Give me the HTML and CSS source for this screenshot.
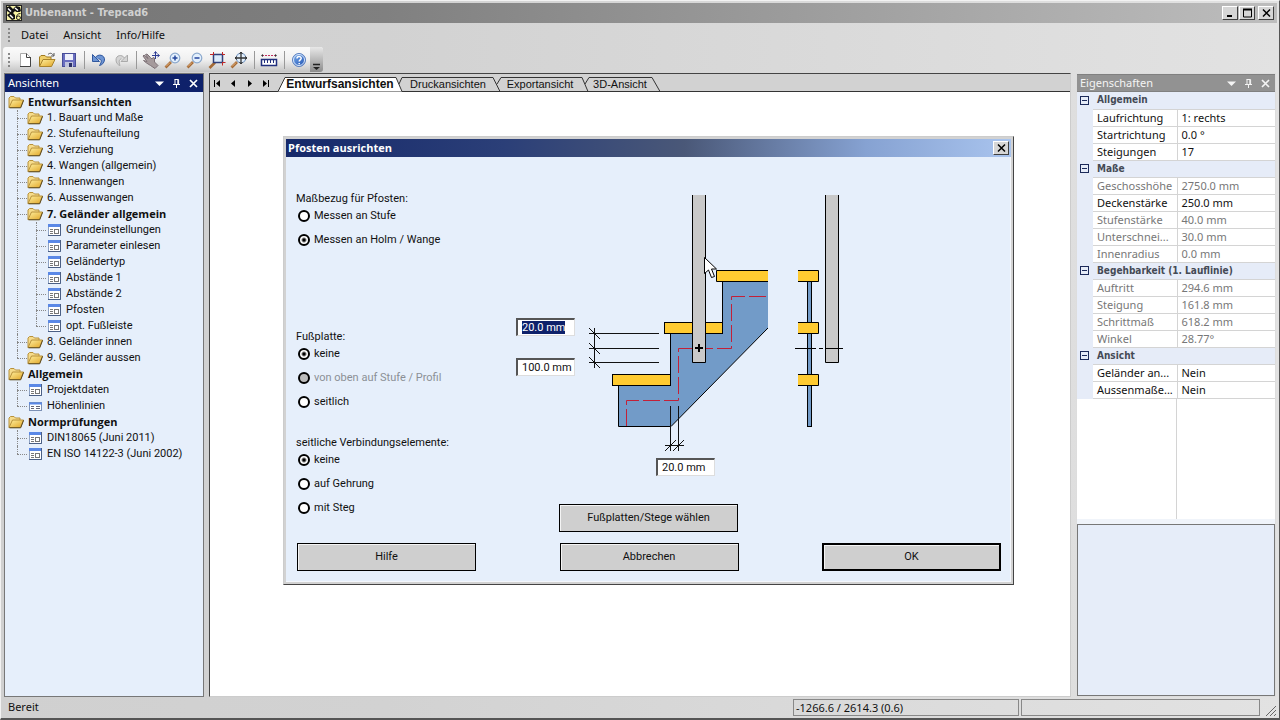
FILE: index.html
```html
<!DOCTYPE html>
<html lang="de">
<head>
<meta charset="utf-8">
<title>Unbenannt - Trepcad6</title>
<link rel="stylesheet" href="styles.css">
</head>
<body>
<svg class="defs" aria-hidden="true">
  <defs>
    <linearGradient id="gold" x1="0" y1="0" x2="1" y2="1"><stop offset="0" stop-color="#fff0a0"/><stop offset="1" stop-color="#e0a526"/></linearGradient>
    <linearGradient id="sky" x1="0" y1="0" x2="1" y2="1"><stop offset="0" stop-color="#7db0ee"/><stop offset="1" stop-color="#1d4fb0"/></linearGradient>
  </defs>
  <symbol id="folder" viewBox="0 0 16 16">
    <path d="M1 13.500V4l1.500-1.500H6L7.500 4H12v2" fill="#f6dc8c" stroke="#b8913a"/>
    <path d="M1 13.500 4.500 6H15.500L12.500 13.500Z" fill="url(#gold)" stroke="#b8913a"/>
    <path d="M1.500 13.800H12.700L15.600 6.300" fill="none" stroke="#5c4a20"/>
  </symbol>
  <symbol id="form" viewBox="0 0 16 16">
    <rect x="2.500" y="2.500" width="12" height="11" fill="#fff" stroke="#8fa3c4"/>
    <path d="M2 3.500H15" stroke="#5a88e6" stroke-width="3"/>
    <path d="M14.500 2V13.500H2" fill="none" stroke="#4a5f85"/>
    <path d="M4 7.500H7M4 9.500H7M4 11.500H7" stroke="#777"/>
    <rect x="8.500" y="7.500" width="4" height="4" fill="#fff" stroke="#777"/>
  </symbol>
  <symbol id="list" viewBox="0 0 16 16">
    <rect x="2.500" y="4.500" width="12" height="8" fill="#fff" stroke="#7b90b5"/>
    <path d="M2 5.500H15" stroke="#5a88e6" stroke-width="2"/>
    <path d="M4 8.500H7M9 8.500H13M4 10.500H7M9 10.500H13" stroke="#667"/>
  </symbol>
  <symbol id="down" viewBox="0 0 11 11"><path d="M1 3.500H10L5.500 8Z" fill="currentColor"/></symbol>
  <symbol id="pin" viewBox="0 0 11 11"><path d="M3.500 1.500H7.500M4 1.500V6.500M6.800 1.500V6.500M7.600 1.500V6.500M2 6.500H9M5.500 7V10" fill="none" stroke="currentColor"/></symbol>
  <symbol id="close" viewBox="0 0 11 11"><path d="M2 2 9 9M9 2 2 9" fill="none" stroke="currentColor" stroke-width="1.700"/></symbol>
  <symbol id="lens" viewBox="0 0 18 18">
    <path d="M1.500 16.500 7 11" stroke="#a56a35" stroke-width="2.600"/>
    <path d="M2 15.500 6 11.500" stroke="#e8b580" stroke-width="1"/>
    <circle cx="11" cy="7" r="4.800" fill="#e3f0fd" stroke="#8ba8cc" stroke-width="1.200"/>
  </symbol>
</svg>

<div class="window">
  <header class="titlebar">
    <svg class="app-icon" viewBox="0 0 16 16" aria-hidden="true">
      <rect width="16" height="16" fill="#f6f2a8"/>
      <path d="M1 2 4 1 7 4 10 1 14 2 15 6 12 8 9 6 7 8 10 11 9 14 6 15 1 10 4 8 1 6Z" fill="#111"/>
      <path d="M2 3.500 5 6.500M9 3 12 5.500M4 10 7 13" stroke="#fff" stroke-width="1.500"/>
      <rect x="9" y="7" width="7" height="9" fill="#fbf6a0"/>
      <path d="M14.500 8.500C11.500 8.500 10.500 10.500 10.500 12.500A2 1.800 0 1 0 12.500 11Q11 11 10.500 12.800" fill="none" stroke="#222"/>
      <rect x=".5" y=".5" width="15" height="15" fill="none" stroke="#222"/>
    </svg>
    <h1 class="title">Unbenannt - Trepcad6</h1>
    <div class="window-buttons">
      <button class="frame-button" type="button" aria-label="Minimieren"><svg viewBox="0 0 11 10"><path d="M2 8H7" stroke="#000" stroke-width="2"/></svg></button>
      <button class="frame-button" type="button" aria-label="Maximieren"><svg viewBox="0 0 11 10"><path d="M1.500 1.500H9.500V9H1.500ZM1 1.500H10" fill="none" stroke="#000"/><path d="M1 1.500H10" stroke="#000" stroke-width="2"/></svg></button>
      <button class="frame-button frame-close" type="button" aria-label="Schließen"><svg viewBox="0 0 11 10"><path d="M2 1.500 9 8.500M9 1.500 2 8.500" stroke="#000" stroke-width="1.500"/></svg></button>
    </div>
  </header>

  <nav class="menubar">
    <span class="grip"></span>
    <button type="button">Datei</button>
    <button type="button">Ansicht</button>
    <button type="button">Info/Hilfe</button>
  </nav>

  <div class="toolbar" role="toolbar" aria-label="Werkzeuge">
    <span class="grip"></span>
    <button type="button" aria-label="Neu"><svg viewBox="0 0 18 18"><path d="M4.500 2.500H10.500L14.500 6.500V15.500H4.500Z" fill="#fff" stroke="#aaa"/><path d="M10.500 2.500V6.500H14.500M14.500 6V15.500H4" fill="none" stroke="#444"/></svg></button>
    <button type="button" aria-label="Öffnen"><svg viewBox="0 0 18 18"><path d="M1.500 15V6L3 4.500H7L8.500 6H13V8" fill="#f0cf6a" stroke="#a07a20"/><path d="M1.500 15.500 5 8.500H17L13.500 15.500Z" fill="url(#gold)" stroke="#a9832c"/><path d="M10 3.500C12 1.500 14 2 15.500 4.500M16 2V5H13" fill="none" stroke="#555"/></svg></button>
    <button type="button" aria-label="Speichern"><svg viewBox="0 0 18 18"><rect x="2.500" y="2.500" width="13" height="13" fill="#6a6ec0" stroke="#474d98"/><rect x="5" y="3" width="8" height="6" fill="#eef0fb"/><rect x="5" y="11" width="8" height="5" fill="#bfc3dd"/><rect x="9" y="12" width="3" height="4" fill="#2a2f66"/></svg></button>
    <span class="separator"></span>
    <button type="button" aria-label="Rückgängig"><svg viewBox="0 0 18 18"><path d="M5 7C8 2 15 4 14.500 9 14 12 12 14 9.500 14.500 12 11 12 8 8.500 8" fill="#6e95d4" stroke="#31589e"/><path d="M2.500 3.500V10.500H9.500Z" fill="#6e95d4" stroke="#31589e"/></svg></button>
    <button type="button" aria-label="Wiederholen" disabled><svg viewBox="0 0 18 18"><path d="M12.500 7C10 3 4 4 4 9 4 12 6 14 8 14.500 6.500 11 7 8 9.500 8" fill="#d5d5d5" stroke="#aaa"/><path d="M15.500 4V10.500H9Z" fill="#d5d5d5" stroke="#aaa"/></svg></button>
    <span class="separator"></span>
    <button type="button" aria-label="Verschieben"><svg viewBox="0 0 18 18"><path d="M1 5 2 4 6 7.500 3.500 3.500 5 3 8.500 6.500 10 8 11 6.500 12.500 7 12.500 11 16 14.500 13 17.500 8.500 14.500 4.500 12 1.500 9.500 5 10.500Z" fill="#a59a9c" stroke="#7d7176"/><path d="M13.500 1V8M10 4.500H17" stroke="#2e3d94"/><path d="M12 2.500 13.500 .500 15 2.500M15.500 3 17.500 4.500 15.500 6" fill="none" stroke="#2e3d94"/></svg></button>
    <button type="button" aria-label="Vergrößern"><svg viewBox="0 0 18 18"><use href="#lens"/><path d="M8.500 7H13.500M11 4.500V9.500" stroke="#24459b" stroke-width="1.500"/></svg></button>
    <button type="button" aria-label="Verkleinern"><svg viewBox="0 0 18 18"><use href="#lens"/><path d="M8.500 7H13.500" stroke="#24459b" stroke-width="1.500"/></svg></button>
    <button type="button" aria-label="Bereich zoomen"><svg viewBox="0 0 18 18"><path d="M1.500 17 7 11.500" stroke="#a56a35" stroke-width="2.600"/><rect x="5.500" y="3.500" width="9" height="8" fill="#dcebfb" stroke="#31407a" stroke-width="1.500"/><path d="M2 3.500H6M5.500 1V4M14 3.500H17M14.500 1V4M14.500 12V14.500M14 11.500H17.500" stroke="#c02828"/></svg></button>
    <button type="button" aria-label="Alles zeigen"><svg viewBox="0 0 18 18"><use href="#lens"/><path d="M11 1V13M5 7H17" stroke="#333" stroke-width="1.300"/><path d="M9.500 3 11 1 12.500 3M9.500 11 11 13 12.500 11M7 5.500 5 7 7 8.500M15 5.500 17 7 15 8.500" fill="none" stroke="#333"/></svg></button>
    <span class="separator"></span>
    <button type="button" aria-label="Messen"><svg viewBox="0 0 18 18"><path d="M2 4.500H16" stroke="#c03060" stroke-dasharray="2 1"/><path d="M1 4.500 3 3V6ZM17 4.500 15 3V6Z" fill="#333"/><rect x="1.500" y="8.500" width="15" height="6" fill="#fff" stroke="#22307e" stroke-width="1.500"/><path d="M4.500 9V12M7.500 9V12M10.500 9V12M13.500 9V12" stroke="#22307e"/></svg></button>
    <span class="separator"></span>
    <button type="button" aria-label="Hilfe anzeigen"><svg viewBox="0 0 18 18"><circle cx="9" cy="9" r="6.500" fill="url(#sky)" stroke="#5a7fc0"/><circle cx="9" cy="9" r="5.500" fill="none" stroke="#dce9fb"/><path d="M7 7.500C7 5 11.200 5 11.200 7.300 11.200 8.800 9.200 9 9.200 10.500M9.200 12V13.300" fill="none" stroke="#fff" stroke-width="1.500"/></svg></button>
    <button class="overflow" type="button" aria-label="Weitere Schaltflächen"><svg viewBox="0 0 9 7"><path d="M1 1.500H8" stroke="#222" stroke-width="1.500"/><path d="M1 4H8L4.500 7Z" fill="#222"/></svg></button>
  </div>

  <main class="workspace">
    <aside class="panel views">
      <div class="panel-head active">
        <h2>Ansichten</h2>
        <button type="button" aria-label="Menü"><svg><use href="#down"/></svg></button>
        <button type="button" aria-label="Anheften"><svg><use href="#pin"/></svg></button>
        <button type="button" aria-label="Schließen"><svg><use href="#close"/></svg></button>
      </div>
      <ul class="tree">
        <li><div class="node strong"><svg><use href="#folder"/></svg>Entwurfsansichten</div>
          <ul>
            <li><div class="node"><svg><use href="#folder"/></svg>1. Bauart und Maße</div></li>
            <li><div class="node"><svg><use href="#folder"/></svg>2. Stufenaufteilung</div></li>
            <li><div class="node"><svg><use href="#folder"/></svg>3. Verziehung</div></li>
            <li><div class="node"><svg><use href="#folder"/></svg>4. Wangen (allgemein)</div></li>
            <li><div class="node"><svg><use href="#folder"/></svg>5. Innenwangen</div></li>
            <li><div class="node"><svg><use href="#folder"/></svg>6. Aussenwangen</div></li>
            <li><div class="node strong"><svg><use href="#folder"/></svg>7. Geländer allgemein</div>
              <ul>
                <li><div class="node"><svg><use href="#form"/></svg>Grundeinstellungen</div></li>
                <li><div class="node"><svg><use href="#form"/></svg>Parameter einlesen</div></li>
                <li><div class="node"><svg><use href="#form"/></svg>Geländertyp</div></li>
                <li><div class="node"><svg><use href="#form"/></svg>Abstände 1</div></li>
                <li><div class="node"><svg><use href="#form"/></svg>Abstände 2</div></li>
                <li><div class="node"><svg><use href="#form"/></svg>Pfosten</div></li>
                <li><div class="node"><svg><use href="#form"/></svg>opt. Fußleiste</div></li>
              </ul>
            </li>
            <li><div class="node"><svg><use href="#folder"/></svg>8. Geländer innen</div></li>
            <li><div class="node"><svg><use href="#folder"/></svg>9. Geländer aussen</div></li>
          </ul>
        </li>
        <li><div class="node strong"><svg><use href="#folder"/></svg>Allgemein</div>
          <ul>
            <li><div class="node"><svg><use href="#form"/></svg>Projektdaten</div></li>
            <li><div class="node"><svg><use href="#list"/></svg>Höhenlinien</div></li>
          </ul>
        </li>
        <li><div class="node strong"><svg><use href="#folder"/></svg>Normprüfungen</div>
          <ul>
            <li><div class="node"><svg><use href="#form"/></svg>DIN18065 (Juni 2011)</div></li>
            <li><div class="node"><svg><use href="#form"/></svg>EN ISO 14122-3 (Juni 2002)</div></li>
          </ul>
        </li>
      </ul>
    </aside>

    <section class="document">
      <div class="tabstrip">
        <svg class="tab-lines" width="460" height="18" viewBox="209 74 460 18" aria-hidden="true">
          <path d="M278 91.500 285 77.500H396L402 91.500Z" fill="#fff"/>
          <path d="M209 91.500H278L285 77.500H396L402 91.500" fill="none" stroke="#333"/>
          <path d="M399 84 402 77.500H493L500 91.500M497 84 501 77.500H582L588 91.500M585 84 589 77.500H652L660 91.500" fill="none" stroke="#333"/>
          <path d="M402 91.500H669" stroke="#333"/>
        </svg>
        <div class="tab-nav">
          <button type="button" aria-label="Erste"><svg viewBox="0 0 9 9"><path d="M1.500 1V8" stroke="#000"/><path d="M7 1V8L3 4.500Z"/></svg></button>
          <button type="button" aria-label="Zurück"><svg viewBox="0 0 9 9"><path d="M6 1V8L2 4.500Z"/></svg></button>
          <button type="button" aria-label="Weiter"><svg viewBox="0 0 9 9"><path d="M3 1V8L7 4.500Z"/></svg></button>
          <button type="button" aria-label="Letzte"><svg viewBox="0 0 9 9"><path d="M7.500 1V8" stroke="#000"/><path d="M2 1V8L6 4.500Z"/></svg></button>
        </div>
        <div class="tabs" role="tablist">
          <button class="tab current" type="button" role="tab" aria-selected="true">Entwurfsansichten</button>
          <button class="tab" type="button" role="tab">Druckansichten</button>
          <button class="tab tab-short" type="button" role="tab">Exportansicht</button>
          <button class="tab tab-short" type="button" role="tab">3D-Ansicht</button>
        </div>
      </div>
      <div class="sheet"></div>
    </section>

    <aside class="panel props">
      <div class="panel-head">
        <h2>Eigenschaften</h2>
        <button type="button" aria-label="Menü"><svg><use href="#down"/></svg></button>
        <button type="button" aria-label="Anheften"><svg><use href="#pin"/></svg></button>
        <button type="button" aria-label="Schließen"><svg><use href="#close"/></svg></button>
      </div>
      <table class="grid">
        <colgroup><col class="col-toggle"><col class="col-name"><col></colgroup>
        <tbody>
          <tr class="group"><td><button type="button" aria-label="Einklappen"></button></td><th colspan="2">Allgemein</th></tr>
          <tr><td></td><td>Laufrichtung</td><td>1: rechts</td></tr>
          <tr><td></td><td>Startrichtung</td><td>0.0 °</td></tr>
          <tr><td></td><td>Steigungen</td><td>17</td></tr>
        </tbody>
        <tbody>
          <tr class="group"><td><button type="button" aria-label="Einklappen"></button></td><th colspan="2">Maße</th></tr>
          <tr class="readonly"><td></td><td>Geschosshöhe</td><td>2750.0 mm</td></tr>
          <tr><td></td><td>Deckenstärke</td><td>250.0 mm</td></tr>
          <tr class="readonly"><td></td><td>Stufenstärke</td><td>40.0 mm</td></tr>
          <tr class="readonly"><td></td><td>Unterschnei...</td><td>30.0 mm</td></tr>
          <tr class="readonly"><td></td><td>Innenradius</td><td>0.0 mm</td></tr>
        </tbody>
        <tbody>
          <tr class="group"><td><button type="button" aria-label="Einklappen"></button></td><th colspan="2">Begehbarkeit (1. Lauflinie)</th></tr>
          <tr class="readonly"><td></td><td>Auftritt</td><td>294.6 mm</td></tr>
          <tr class="readonly"><td></td><td>Steigung</td><td>161.8 mm</td></tr>
          <tr class="readonly"><td></td><td>Schrittmaß</td><td>618.2 mm</td></tr>
          <tr class="readonly"><td></td><td>Winkel</td><td>28.77°</td></tr>
        </tbody>
        <tbody>
          <tr class="group"><td><button type="button" aria-label="Einklappen"></button></td><th colspan="2">Ansicht</th></tr>
          <tr><td></td><td>Geländer an...</td><td>Nein</td></tr>
          <tr><td></td><td>Aussenmaße...</td><td>Nein</td></tr>
        </tbody>
      </table>
      <div class="grid-rest"><span></span></div>
      <div class="hint"></div>
    </aside>
  </main>

  <footer class="statusbar">
    <span class="status-text">Bereit</span>
    <span class="status-cell">-1266.6 / 2614.3 (0.6)</span>
    <span class="status-cell status-empty"></span>
    <svg class="resize" viewBox="0 0 12 12" aria-hidden="true"><path d="M1 11 11 1M5 11 11 5M9 11 11 9" stroke="#666"/></svg>
  </footer>
</div>

<form class="dialog" role="dialog" aria-label="Pfosten ausrichten">
  <div class="dialog-title">
    <h2>Pfosten ausrichten</h2>
    <button class="frame-button" type="button" aria-label="Dialog schließen"><svg viewBox="0 0 11 10"><path d="M2 1.500 9 8.500M9 1.500 2 8.500" stroke="#000" stroke-width="1.500"/></svg></button>
  </div>
  <div class="dialog-body">
    <div class="dialog-main">
      <div class="options">
        <fieldset>
          <legend>Maßbezug für Pfosten:</legend>
          <label><input type="radio" name="bezug">Messen an Stufe</label>
          <label><input type="radio" name="bezug" checked>Messen an Holm / Wange</label>
        </fieldset>
        <fieldset class="after-fields">
          <legend>Fußplatte:</legend>
          <label><input type="radio" name="platte" checked>keine</label>
          <label class="off"><input type="radio" name="platte" disabled>von oben auf Stufe / Profil</label>
          <label><input type="radio" name="platte">seitlich</label>
        </fieldset>
        <fieldset>
          <legend>seitliche Verbindungselemente:</legend>
          <label><input type="radio" name="verbindung" checked>keine</label>
          <label><input type="radio" name="verbindung">auf Gehrung</label>
          <label><input type="radio" name="verbindung">mit Steg</label>
        </fieldset>
      </div>
      <div class="measures">
        <div class="measure-row">
          <div class="heights">
            <input id="abstand-oben" type="text" value="20.0 mm" aria-label="Abstand oben">
            <input type="text" value="100.0 mm" aria-label="Abstand unten">
          </div>
          <div class="figure">
            <svg class="drawing" width="260" height="262" viewBox="588 190 260 262" role="img" aria-label="Treppe mit Pfosten">
              <path d="M723 281H768V328L671 426.500H618.500V385H671V333H723Z" fill="#729bc8"/>
              <path d="M768 328 671 426.500H618.500V385M670.500 385V333M722.500 333V281" fill="none" stroke="#000"/>
              <path d="M626.500 426V400.500H678.500V348.500H731.500V296.500H768" fill="none" stroke="#c22038" stroke-dasharray="17 4"/>
              <path d="M768 270.500H716.500V281.500H768" fill="#ffcb31" stroke="#000"/>
              <rect x="664.500" y="322.500" width="58" height="11" fill="#ffcb31" stroke="#000"/>
              <rect x="612.500" y="374.500" width="58" height="11" fill="#ffcb31" stroke="#000"/>
              <rect x="693" y="195" width="12" height="167" fill="#c9c9c9"/>
              <path d="M692.500 195V362.500H705.500V195" fill="none" stroke="#000"/>
              <path d="M695 348H703M699 344V352" stroke="#000" stroke-width="2"/>
              <rect x="807.500" y="276.500" width="4" height="150" fill="#729bc8" stroke="#000"/>
              <path d="M798 270.500H818.500V281.500H798" fill="#ffcb31" stroke="#000"/>
              <path d="M798 322.500H818.500V333.500H798" fill="#ffcb31" stroke="#000"/>
              <path d="M798 374.500H818.500V385.500H798" fill="#ffcb31" stroke="#000"/>
              <rect x="826" y="195" width="12" height="167" fill="#c9c9c9"/>
              <path d="M825.500 195V362.500H838.500V195" fill="none" stroke="#000"/>
              <path d="M795 348.500H843" stroke="#000" stroke-dasharray="21 3 4 3"/>
              <path d="M594.500 328V368M589 333.500H659M589 348.500H659M589 362.500H659M589 328 600 339M589 343 600 354M589 357 600 368" stroke="#111"/>
              <path d="M670.500 406V451M678.500 406V451M665 445.500H684M665 451 676 440M673 451 684 440" stroke="#111"/>
              <path class="pointer" d="M704.500 257.500V273.500L708.500 270 711.500 277.500 714.500 276.500 711.500 269H716.500Z" fill="#fff" stroke="#000"/>
            </svg>
            <input type="text" value="20.0 mm" aria-label="Abstand seitlich">
          </div>
        </div>
        <button class="push choose" type="button">Fußplatten/Stege wählen</button>
      </div>
    </div>
    <div class="dialog-actions">
      <button class="push" type="button">Hilfe</button>
      <button class="push" type="button">Abbrechen</button>
      <button class="push default" type="submit">OK</button>
    </div>
  </div>
</form>
<script src="app.js"></script>
</body>
</html>
```
FILE: styles.css
```css
* { box-sizing: border-box; }

:root {
  --ui: "Noto Sans", "Open Sans", sans-serif;
  --form: Roboto, "Liberation Sans", sans-serif;
  --face: #d2d2d2;
  --pane: #e6effb;
}

body { margin: 0; font: 11px/16px var(--ui); color: #111; overflow: hidden; }
h1, h2 { margin: 0; font-size: 11px; }
ul { margin: 0; padding: 0; list-style: none; }
button { border: 0; padding: 0; background: none; font: inherit; color: inherit; display: flex; align-items: center; justify-content: center; }
button svg { flex: none; }
.defs { position: absolute; width: 0; height: 0; }

.window {
  display: flex;
  flex-direction: column;
  height: 100vh;
  padding: 2px 2px 0;
  border: 1px solid #f2f2f2;
  border-right-color: #555;
  border-bottom: 2px solid #555;
  background: linear-gradient(90deg, #d0d0d0, #d2d2d2 30%, #e2e2e2);
}

/* Title bar */
.titlebar { display: flex; align-items: center; gap: 3px; height: 20px; padding: 0 3px 0 3px; background: linear-gradient(90deg, #757575, #808080 30%, #bdbdbd); }
.app-icon { width: 16px; height: 16px; }
.title { flex: 1; font: bold 11px/18px "DejaVu Sans Condensed", sans-serif; color: #d0d0d0; }
.window-buttons { display: flex; gap: 1px; }
.frame-button { width: 16px; height: 14px; background: #d6d6d6; border: 1px solid; border-color: #fff #404040 #404040 #fff; }
.frame-button svg { width: 11px; height: 10px; }
.frame-close { margin-left: 2px; }

/* Menu and toolbar */
.grip { width: 2px; height: 14px; background: repeating-linear-gradient(#888 0 2px, transparent 2px 4px); }
.menubar { display: flex; align-items: center; gap: 15px; height: 24px; padding-left: 5px; }
.menubar .grip { margin-right: -4px; }
.toolbar { display: flex; align-items: center; align-self: flex-start; height: 25px; padding-left: 5px; border-radius: 3px; background: linear-gradient(#fbfbfb, #f0f0f0 50%, #c4c4c4); }
.toolbar .grip { margin-right: 4px; }
.toolbar button { width: 22px; height: 22px; }
.toolbar svg { width: 18px; height: 18px; }
.separator { width: 8px; height: 18px; background: linear-gradient(#999, #999) 4px 0 / 1px 100% no-repeat; }
.toolbar .overflow { width: 13px; height: 25px; align-items: flex-end; padding-bottom: 2px; background: linear-gradient(#e8e8e8, #8c8c8c); border-radius: 0 3px 3px 0; }
.toolbar .overflow svg { width: 9px; height: 7px; }

/* Work area */
.workspace { flex: 1; min-height: 0; display: grid; grid-template-columns: 200px minmax(0, 1fr) 200px; gap: 5px; padding: 1px 1px 0; }
.panel { display: flex; flex-direction: column; min-height: 0; border: 1px solid #777; }
.panel-head { display: flex; align-items: center; height: 18px; padding: 0 1px 0 3px; background: #929292; color: #f4f4f4; }
.panel-head.active { background: #0e216a; color: #fff; }
.panel-head h2 { flex: 1; font-weight: normal; }
.panel-head button { width: 17px; height: 17px; }
.panel-head svg { width: 11px; height: 11px; }

.views { background: var(--pane); }
.tree { padding: 2px 0 0 3px; font-family: var(--form); }
.tree ul { margin-left: 9px; }
.tree ul li { position: relative; padding-left: 10px; }
.tree ul li::before { content: ""; position: absolute; left: 0; top: 0; bottom: 0; border-left: 1px dotted #888; }
.tree ul li:last-child::before { bottom: auto; height: 8px; }
.tree ul li::after { content: ""; position: absolute; left: 0; top: 8px; width: 10px; border-top: 1px dotted #888; }
.node { display: flex; align-items: center; gap: 4px; height: 16px; line-height: 18px; white-space: nowrap; }
.node svg { width: 16px; height: 16px; }
.strong { font: bold 11px/16px "Open Sans", sans-serif; }

.document { display: flex; flex-direction: column; min-width: 0; border: 1px solid; border-color: #444 #ccc #ccc #444; background: #fff; }
.tabstrip { position: relative; display: flex; height: 18px; background: linear-gradient(var(--face), var(--face)) 0 0 / 100% 17px no-repeat, #333; }
.tab-lines { position: absolute; left: -1px; top: 0; }
.tab-nav { position: relative; display: flex; gap: 2px; width: 68px; }
.tab-nav button { width: 14px; height: 18px; }
.tab-nav svg { width: 9px; height: 9px; }
.tabs { position: relative; display: flex; padding-left: 6px; }
.tab { width: 98px; height: 20px; font: 11px/18px "Liberation Sans", Arial, sans-serif; }
.tab.current { width: 112px; margin-right: 3px; font-size: 12px; font-weight: bold; }
.tab-short { width: 86px; }
.tab-short + .tab-short { width: 74px; }
.sheet { flex: 1; }

/* Property grid */
.props { border-color: #ddd; background: var(--pane); }
.props .panel-head { border: 1px solid #808080; border-width: 1px 0; }
.grid { width: 100%; table-layout: fixed; border-collapse: collapse; background: #fff; }
.col-toggle { width: 16px; }
.col-name { width: 84px; }
.grid td, .grid th { height: 17px; padding: 0 0 0 4px; line-height: 16px; text-align: left; white-space: nowrap; border-bottom: 1px solid #d4d4d4; }
.grid td:nth-child(2) { border-right: 1px solid #d4d4d4; }
.grid td:first-child { padding: 0 0 0 3px; background: #e6ecf8; border-color: #e6ecf8; }
.grid th { background: #e6ecf8; color: #444a55; font: bold 10px/16px "DejaVu Sans Condensed", sans-serif; }
.grid td:first-child button { width: 9px; height: 9px; border: 1px solid #1c2a5a; background: linear-gradient(#1c2a5a, #1c2a5a) center / 5px 1px no-repeat; }
.readonly td { color: #777; }
.grid-rest { flex: 1; display: flex; background: #fff; border-bottom: 5px solid #f0f4fa; }
.grid-rest span { width: 100px; border-right: 1px solid #d4d4d4; }
.hint { height: 172px; border: 1px solid #777; background: #e6edf9; }

/* Status bar */
.statusbar { display: flex; align-items: center; gap: 2px; height: 21px; padding: 0 0 1px; }
.status-text { flex: 1; padding-left: 5px; }
.status-cell { width: 226px; height: 17px; padding-left: 2px; border: 1px solid #888; line-height: 15px; }
.status-empty { width: 239px; }
.resize { width: 12px; height: 12px; align-self: flex-end; margin-left: 3px; }

/* Dialog floating over the document */
.dialog { position: absolute; left: 283px; top: 136px; width: 731px; border: 1px solid; border-color: #ccc #444 #444 #ccc; background: var(--face); padding: 2px; font-family: var(--form); }
.dialog-title { display: flex; align-items: center; justify-content: space-between; height: 18px; padding: 0 2px; background: linear-gradient(90deg, #16296a, #2b3f78 30%, #4a5878 55%, #86a2d2 80%, #a9c4ee); color: #fff; }
.dialog-title h2 { font-family: "Open Sans", sans-serif; }
.dialog-body { padding: 33px 10px 10px; background: var(--pane); border: 1px solid #f4f7fc; border-width: 0 1px 1px 0; }
.dialog-main { display: flex; }
.options { width: 220px; }
fieldset { margin: 0 0 20px; padding: 0; border: 0; min-width: 0; }
fieldset:last-child { margin-bottom: 0; }
fieldset.after-fields { margin-top: 76px; }
legend { padding: 0; height: 14px; line-height: 18px; }
label { display: flex; align-items: center; gap: 4px; height: 24px; padding-left: 2px; }
.off { color: #8b8f96; }
input { font: inherit; color: inherit; margin: 0; }
input[type="radio"] { appearance: none; width: 12px; height: 12px; border: 2px solid #000; border-radius: 50%; background: #fff; }
input[type="radio"]:checked { background: radial-gradient(#000 0 1px, #fff 3px); }
input[type="radio"]:disabled { background: #bbb; }
input[type="text"] { display: block; width: 59px; height: 18px; padding: 0 0 0 4px; border: 1px solid; border-color: #555 #ddd #ddd #555; border-width: 2px 1px 1px 2px; border-radius: 0; background: #fff; outline: 0; }
input::selection { background: #0e216a; color: #fff; }
.measure-row { display: flex; }
.heights { display: flex; flex-direction: column; gap: 22px; width: 72px; padding-top: 128px; }
.drawing { display: block; }
.figure input { margin: 6px 0 0 68px; }
.pointer { pointer-events: none; }
.push { width: 179px; height: 28px; border: 1px solid #000; background: #cfcfcf; box-shadow: inset 1px 1px #f4f4f4; }
.push.default { border-width: 2px; }
.choose { margin: 28px 0 0 43px; }
.dialog-actions { display: flex; justify-content: space-between; margin: 11px -1px 0 1px; }
```
FILE: app.js
```js
const firstField = document.getElementById('abstand-oben');
firstField.focus();
firstField.select();
```
